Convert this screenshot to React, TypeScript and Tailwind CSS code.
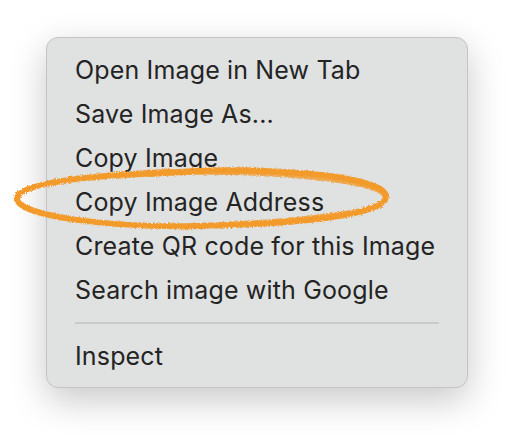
import React from "react";

const items = [
  "Open Image in New Tab",
  "Save Image As...",
  "Copy Image",
  "Copy Image Address",
  "Create QR code for this Image",
  "Search image with Google",
];

function Row({ label }: { label: string }) {
  return (
    <div className="h-[44px] flex items-center pl-[28px] text-[25px] text-[#242424] tracking-[0.15px]">
      {label}
    </div>
  );
}

export default function App() {
  return (
    <div
      className="relative w-[514px] h-[442px] bg-white overflow-hidden"
      style={{ fontFamily: "Inter, 'Noto Sans', sans-serif" }}
    >
      <div className="ml-[46px] mt-[37px] w-[422px] h-[351px] rounded-[12px] bg-[#e0e1e1] border border-[#c4c4c4] shadow-[0_12px_36px_rgba(0,0,0,0.22)] pt-[11px]">
        {items.map((label) => (
          <Row key={label} label={label} />
        ))}
        <div className="mx-[28px] mt-[9px] mb-[11px] h-[2px] bg-[#c9caca]" />
        <Row label="Inspect" />
      </div>

      {/* hand-drawn highlight around "Copy Image Address" */}
      <svg
        className="absolute left-0 top-0 pointer-events-none"
        width="514"
        height="442"
        viewBox="0 0 514 442"
      >
        <defs>
          <filter id="rough">
            <feTurbulence type="fractalNoise" baseFrequency="1.2" numOctaves="2" result="n" />
            <feDisplacementMap in="SourceGraphic" in2="n" scale="4" />
          </filter>
        </defs>
        <g filter="url(#rough)" fill="none" stroke="#f29a2c" strokeLinecap="round">
          <path
            d="M150 174 C 260 164, 384 176, 386 196 C 388 216, 290 224, 200 226 C 110 228, 18 216, 17 199 C 16 184, 80 176, 170 172"
            strokeWidth="6"
          />
          <path
            d="M120 177 C 230 167, 381 179, 384 197 C 385 214, 270 222, 190 225"
            strokeWidth="3"
            opacity="0.8"
          />
        </g>
      </svg>
    </div>
  );
}
